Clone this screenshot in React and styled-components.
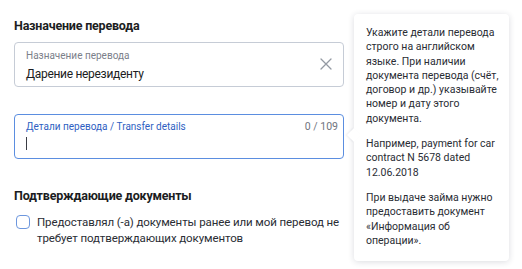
import React from "react";
import styled, { createGlobalStyle } from "styled-components";

const GlobalStyle = createGlobalStyle`
  body {
    margin: 0;
    background: #ffffff;
    font-family: Roboto, "Liberation Sans", sans-serif;
    color: #1f2229;
  }
`;

const Page = styled.div`
  display: flex;
  align-items: flex-start;
  width: 522px;
  height: 269px;
  overflow: hidden;
`;

const Form = styled.div`
  width: 330px;
  padding: 17px 0 0 14px;
  display: flex;
  flex-direction: column;
`;

const Heading = styled.h3`
  margin: 0 0 ${(p) => p.gap || 12}px;
  font-size: 12.5px;
  line-height: 18px;
  font-weight: 700;
  letter-spacing: -0.2px;
  color: #1b1d22;
`;

const Field = styled.div`
  position: relative;
  box-sizing: border-box;
  height: 45px;
  padding: ${(p) => (p.focused ? 4 : 5)}px 11px 0;
  border: 1px solid ${(p) => (p.focused ? "#5b8ee0" : "#c6ccd6")};
  border-radius: 4px;
  margin-bottom: ${(p) => p.gap || 0}px;
  display: flex;
  flex-direction: column;
`;

const LabelRow = styled.div`
  display: flex;
  justify-content: space-between;
  font-size: 10px;
  line-height: 15px;
  color: ${(p) => (p.focused ? "#2f5fc2" : "#7b808a")};
`;

const Counter = styled.span`
  color: #6f747e;
  font-size: 10.5px;
  margin-right: -6px;
`;

const Value = styled.div`
  font-size: 12px;
  letter-spacing: -0.3px;
  line-height: 18px;
  margin-top: 2px;
  color: #1b1d22;
`;

const Caret = styled.div`
  width: 1px;
  height: 13px;
  margin-top: 3px;
  background: #3a3d44;
`;

const ClearButton = styled.button`
  position: absolute;
  right: 10px;
  top: 14px;
  border: 0;
  padding: 0;
  background: none;
  width: 14px;
  height: 14px;
  display: flex;
`;

const CheckRow = styled.label`
  display: flex;
  align-items: flex-start;
  gap: 7px;
  padding-left: 2px;
`;

const Box = styled.span`
  flex: none;
  box-sizing: border-box;
  width: 14px;
  height: 14px;
  margin-top: 1px;
  border: 1.5px solid #6d97de;
  border-radius: 4px;
`;

const CheckText = styled.span`
  font-size: 11.5px;
  letter-spacing: -0.1px;
  line-height: 16px;
  color: #2a2d34;
`;

const Tooltip = styled.div`
  position: relative;
  box-sizing: border-box;
  width: 155px;
  margin: 14px 0 0 10px;
  padding: 12px 9px 13px 12px;
  background: #fff;
  border-radius: 4px;
  box-shadow: 0 1px 6px rgba(30, 40, 60, 0.16);
  font-size: 10.5px;
  line-height: 14.3px;
  color: #2a2d34;

  &::before {
    content: "";
    position: absolute;
    left: -5px;
    top: 116px;
    width: 10px;
    height: 10px;
    background: #fff;
    transform: rotate(45deg);
    box-shadow: -1px 1px 2px rgba(30, 40, 60, 0.08);
  }
`;

const Para = styled.p`
  position: relative;
  margin: 0 0 ${(p) => (p.last ? 0 : 11)}px;
`;

const App = () => (
  <>
    <GlobalStyle />
    <Page>
      <Form>
        <Heading gap={7}>Назначение перевода</Heading>
        <Field gap={27}>
          <LabelRow>Назначение перевода</LabelRow>
          <Value>Дарение нерезиденту</Value>
          <ClearButton aria-label="Очистить">
            <svg width="14" height="14" viewBox="0 0 14 14" fill="none">
              <path d="M2 2L12 12M12 2L2 12" stroke="#949aa3" strokeWidth="1.3" strokeLinecap="round" />
            </svg>
          </ClearButton>
        </Field>
        <Field focused gap={28}>
          <LabelRow focused>
            <span>Детали перевода / Transfer details</span>
            <Counter>0 / 109</Counter>
          </LabelRow>
          <Caret />
        </Field>
        <Heading gap={9}>Подтверждающие документы</Heading>
        <CheckRow>
          <Box />
          <CheckText>
            Предоставлял (-а) документы ранее или мой перевод не требует подтверждающих документов
          </CheckText>
        </CheckRow>
      </Form>
      <Tooltip>
        <Para>
          Укажите детали перевода строго на английском языке. При наличии документа перевода (счёт, договор и др.) указывайте номер и дату этого документа.
        </Para>
        <Para>Например, payment for car contract N 5678 dated 12.06.2018</Para>
        <Para last>
          При выдаче займа нужно предоставить документ «Информация об операции».
        </Para>
      </Tooltip>
    </Page>
  </>
);

export default App;
